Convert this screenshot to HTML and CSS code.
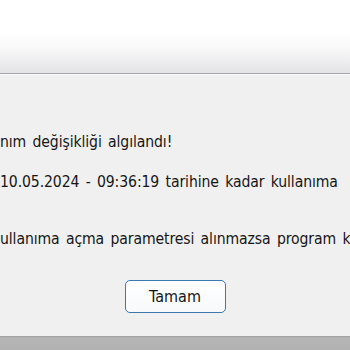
FILE: index.html
```html
<!DOCTYPE html>
<html lang="tr">
<head>
<meta charset="utf-8">
<link rel="stylesheet" href="styles.css">
</head>
<body>
<div class="window">
  <div class="titlebar"></div>
  <div class="content">
    <p class="line l1">nım değişikliği algılandı!</p>
    <p class="line l2">10.05.2024 - 09:36:19 tarihine kadar kullanıma</p>
    <p class="line l3">ullanıma açma parametresi alınmazsa program k</p>
    <div class="actions">
      <button class="btn">Tamam</button>
    </div>
  </div>
  <div class="footer"></div>
</div>
</body>
</html>
```

FILE: styles.css
```css
html, body {
  margin: 0;
  padding: 0;
}
body {
  width: 350px;
  height: 350px;
  overflow: hidden;
  font-family: "DejaVu Sans Condensed", "DejaVu Sans", sans-serif;
}
.window {
  display: flex;
  flex-direction: column;
  height: 350px;
}
.titlebar {
  height: 73px;
  flex: none;
  background: linear-gradient(to bottom, #ffffff 0px, #ffffff 34px, #f7f7f8 50px, #e4e4e6 72px);
  border-bottom: 1px solid #a6a6a8;
}
.content {
  flex: 1;
  background: #f0f0f0;
  border-top: 1px solid #fafafc;
  padding-top: 57px;
  white-space: nowrap;
  overflow: hidden;
}
.line {
  margin: 0;
  font-size: 15.6px;
  line-height: 20px;
  letter-spacing: -0.1px;
  word-spacing: 2px;
  color: #161616;
}
.l2 { margin-top: 20px; }
.l3 { margin-top: 37px; }
.actions {
  display: flex;
  justify-content: center;
  margin-top: 31px;
}
.btn {
  width: 101px;
  height: 33px;
  border: 1.5px solid #3b78b0;
  border-radius: 5px;
  background: linear-gradient(to bottom, #ffffff, #f7f9fb);
  font-family: inherit;
  font-size: 16px;
  color: #161616;
  padding: 0;
}
.footer {
  height: 14px;
  flex: none;
  background: linear-gradient(to bottom, #9e9e9e 0px, #b6b6b6 2px, #b1b1b1 14px);
}
```
